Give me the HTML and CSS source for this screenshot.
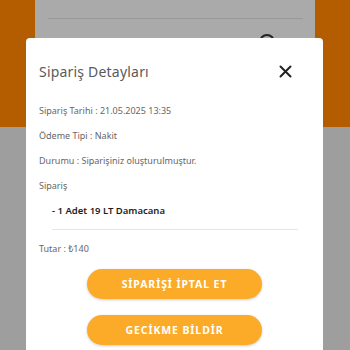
FILE: index.html
```html
<!DOCTYPE html>
<html lang="tr">
<head>
<meta charset="utf-8">
<link rel="stylesheet" href="styles.css">
</head>
<body>
<div class="page">
  <div class="top">
    <div class="card">
      <div class="card-line"></div>
      <div class="card-icon"></div>
    </div>
  </div>
  <div class="bottom"></div>
</div>
<div class="modal">
  <div class="modal-head">
    <div class="title">Sipariş Detayları</div>
    <svg class="close" width="13" height="13" viewBox="0 0 13 13"><path d="M1.5 1.5 L11.5 11.5 M11.5 1.5 L1.5 11.5" stroke="#222" stroke-width="2" stroke-linecap="round"/></svg>
  </div>
  <div class="rows">
    <div class="row">Sipariş Tarihi : 21.05.2025 13:35</div>
    <div class="row">Ödeme Tipi : Nakit</div>
    <div class="row">Durumu : Siparişiniz oluşturulmuştur.</div>
    <div class="row">Sipariş</div>
    <div class="item">- 1 Adet 19 LT Damacana</div>
  </div>
  <div class="divider"></div>
  <div class="row total">Tutar : ₺140</div>
  <div class="buttons">
    <div class="btn">SİPARİŞİ İPTAL ET</div>
    <div class="btn">GECİKME BİLDİR</div>
  </div>
</div>
</body>
</html>
```
FILE: styles.css
```css
html, body {
  margin: 0;
  padding: 0;
  width: 350px;
  height: 350px;
  overflow: hidden;
  font-family: "Noto Sans", "DejaVu Sans", sans-serif;
}
.page {
  height: 350px;
  display: flex;
  flex-direction: column;
  background: #9e9e9e;
}
.top {
  height: 127px;
  background: #b35c00;
  padding: 0 35px;
}
.card {
  height: 127px;
  background: #aaaaaa;
  padding: 18px 12px 0 13px;
  box-sizing: border-box;
  position: relative;
}
.card-line {
  height: 1px;
  background: #999;
}
.card-icon {
  position: absolute;
  left: 224px;
  top: 34px;
  width: 16px;
  height: 16px;
  border: 2px solid #222;
  border-radius: 50%;
  box-sizing: border-box;
}
.bottom {
  flex: 1;
}
.modal {
  position: absolute;
  left: 26px;
  top: 38px;
  width: 297px;
  height: 330px;
  background: #fff;
  border-radius: 4px;
  box-sizing: border-box;
  padding: 24px 13px 0 13px;
}
.modal-head {
  display: flex;
  justify-content: space-between;
  align-items: center;
  padding-right: 18px;
}
.title {
  font-size: 14px;
  color: #5a5a5a;
  letter-spacing: 0.2px;
}
.close {
  display: block;
}
.rows {
  margin-top: 23px;
  display: flex;
  flex-direction: column;
  gap: 11px;
}
.row {
  font-size: 9px;
  line-height: 14px;
  color: #666;
}
.item {
  font-size: 9.5px;
  line-height: 14px;
  color: #1e1e1e;
  font-weight: 600;
  padding-left: 13px;
}
.divider {
  height: 1px;
  background: #e6e6e6;
  margin: 11px 12px 0 13px;
}
.total {
  margin-top: 12px;
}
.buttons {
  margin-top: 13px;
  display: flex;
  flex-direction: column;
  align-items: center;
  gap: 16px;
}
.btn {
  width: 175px;
  height: 30px;
  border-radius: 15px;
  background: #fbab27;
  color: #fff;
  font-weight: 700;
  font-size: 10.5px;
  letter-spacing: 0.9px;
  display: flex;
  align-items: center;
  justify-content: center;
  box-shadow: 0 1px 3px rgba(0,0,0,0.2);
}
```
